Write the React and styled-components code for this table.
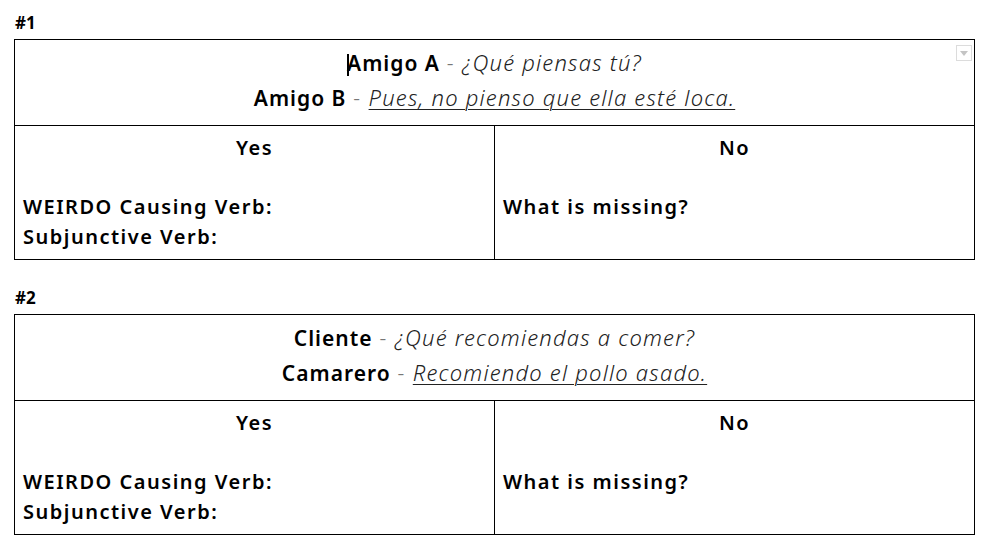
import React from "react";
import styled, { createGlobalStyle } from "styled-components";

const GlobalStyle = createGlobalStyle`
  html, body {
    margin: 0;
    padding: 0;
    background: #ffffff;
  }
  body {
    font-family: "Noto Sans", "Open Sans", sans-serif;
    color: #000;
  }
`;

const Page = styled.div`
  width: 993px;
  height: 554px;
  padding: 11px 0 0 14px;
  box-sizing: border-box;
  display: flex;
  flex-direction: column;
  gap: 26px;
  overflow: hidden;
`;

const Section = styled.section`
  display: flex;
  flex-direction: column;
  gap: 4px;
`;

const Label = styled.div`
  font-size: 17px;
  line-height: 24px;
  font-weight: 700;
  padding-left: 1px;
`;

const Table = styled.div`
  width: 961px;
  box-sizing: border-box;
  border: 1px solid #000;
  display: grid;
  grid-template-columns: 479px 1fr;
  grid-template-rows: 85px 134px;
`;

const HeaderCell = styled.div`
  grid-column: 1 / span 2;
  position: relative;
  padding-top: 5px;
  text-align: center;
  font-size: 21px;
  line-height: 34px;
`;

const Speaker = styled.span`
  font-weight: 600;
  letter-spacing: 1px;
`;

const Dash = styled.span`
  font-weight: 300;
  color: #777;
  letter-spacing: 1.5px;
`;

const Line = styled.span`
  font-style: italic;
  font-weight: 300;
  font-size: 22px;
  letter-spacing: 1.2px;
  color: #222;
  text-decoration: ${(p) => (p.underline ? "underline" : "none")};
  text-underline-offset: 3px;
  text-decoration-thickness: 1px;
`;

const Caret = styled.span`
  display: inline-block;
  width: 2px;
  height: 22px;
  margin-right: -2px;
  background: #000;
  vertical-align: -5px;
`;

const Dropdown = styled.div`
  position: absolute;
  top: 5px;
  right: 2px;
  width: 16px;
  height: 16px;
  box-sizing: border-box;
  border: 1px solid #dcdcdc;
  display: flex;
  align-items: center;
  justify-content: center;
`;

const Cell = styled.div`
  border-top: 1px solid #000;
  border-left: ${(p) => (p.divided ? "1px solid #000" : "none")};
  padding: 7px 8px 0;
  font-size: 20px;
  line-height: 29.5px;
  font-weight: 600;
  letter-spacing: 1.5px;
`;

const CellTitle = styled.div`
  text-align: center;
  margin-bottom: 29.5px;
`;

const dialogs = [
  {
    id: "#1",
    caret: true,
    dropdown: true,
    a: { who: "Amigo A", says: "¿Qué piensas tú?" },
    b: { who: "Amigo B", says: "Pues, no pienso que ella esté loca." },
  },
  {
    id: "#2",
    a: { who: "Cliente", says: "¿Qué recomiendas a comer?" },
    b: { who: "Camarero", says: "Recomiendo el pollo asado." },
  },
];

const Exercise = ({ item }) => (
  <Section>
    <Label>{item.id}</Label>
    <Table>
      <HeaderCell>
        {item.dropdown && (
          <Dropdown>
            <svg width="8" height="5" viewBox="0 0 8 5">
              <path d="M0 0h8L4 5z" fill="#c4c4c4" />
            </svg>
          </Dropdown>
        )}
        <div>
          {item.caret && <Caret />}
          <Speaker>{item.a.who}</Speaker>
          <Dash> - </Dash>
          <Line>{item.a.says}</Line>
        </div>
        <div>
          <Speaker>{item.b.who}</Speaker>
          <Dash> - </Dash>
          <Line underline>{item.b.says}</Line>
        </div>
      </HeaderCell>
      <Cell>
        <CellTitle>Yes</CellTitle>
        <div>WEIRDO Causing Verb:</div>
        <div>Subjunctive Verb:</div>
      </Cell>
      <Cell divided>
        <CellTitle>No</CellTitle>
        <div>What is missing?</div>
      </Cell>
    </Table>
  </Section>
);

export default function App() {
  return (
    <>
      <GlobalStyle />
      <Page>
        {dialogs.map((d) => (
          <Exercise key={d.id} item={d} />
        ))}
      </Page>
    </>
  );
}
